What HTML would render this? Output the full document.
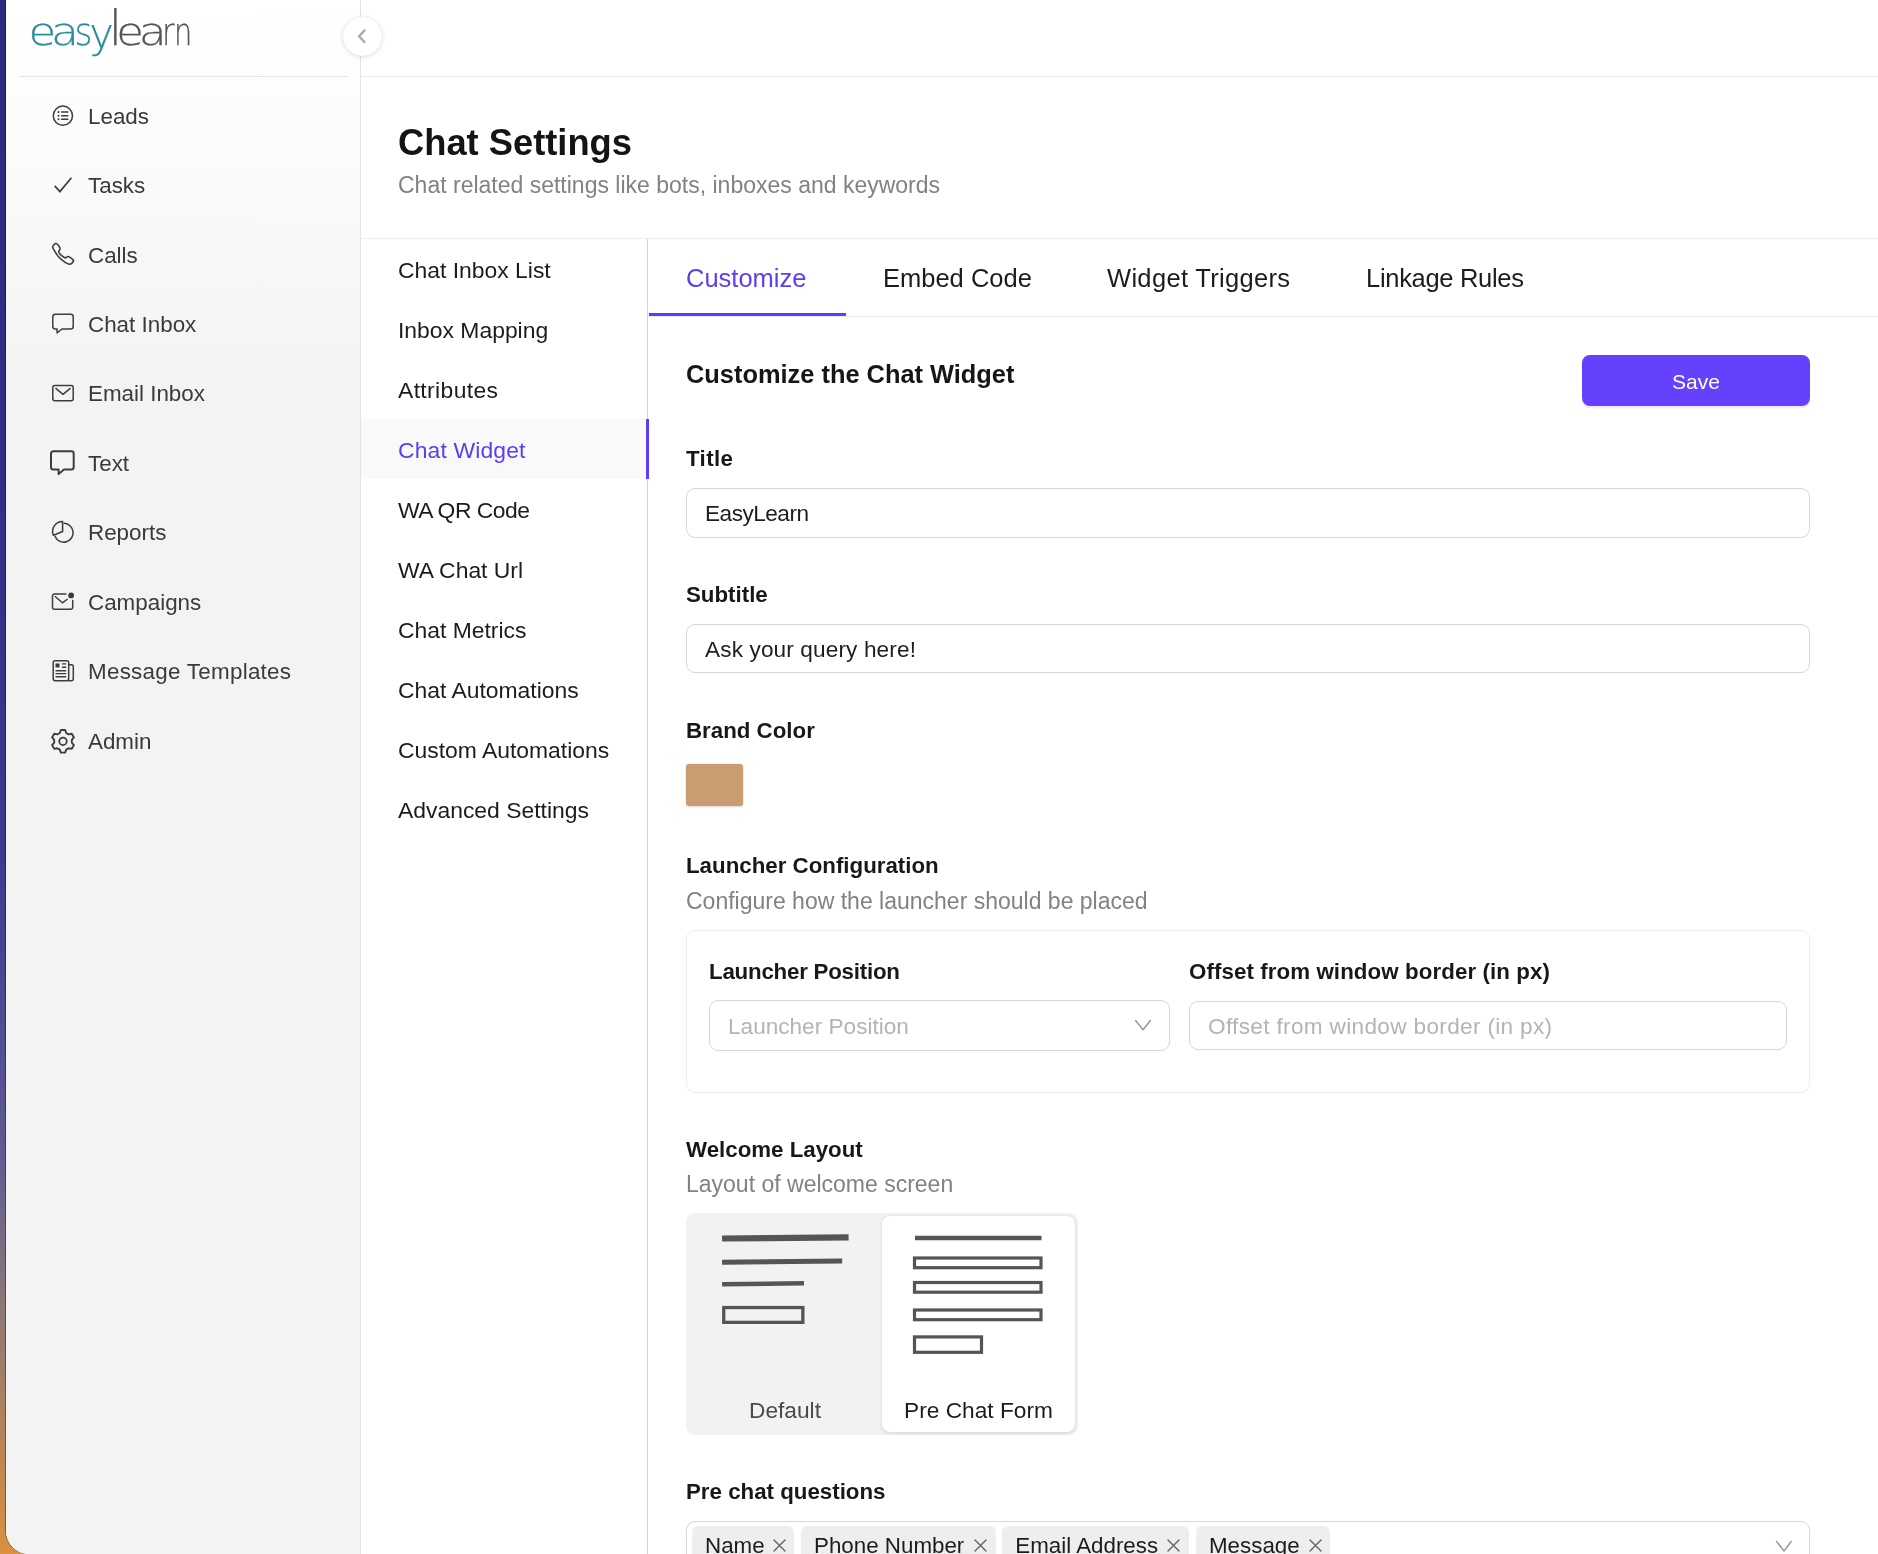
<!DOCTYPE html>
<html lang="en">
<head>
<meta charset="utf-8">
<title>Chat Settings</title>
<style>
*{box-sizing:border-box;margin:0;padding:0}
html,body{width:1878px;height:1554px;overflow:hidden}
body{font-family:"Liberation Sans",sans-serif;color:#1a1a1a;
  background:linear-gradient(to bottom,#2a2a80 0%,#2e2e86 30%,#3a3a90 55%,#5f5a94 74%,#8c7878 84%,#b5835a 92%,#d8913f 100%);
  position:relative}
.window{position:absolute;left:6px;top:0;width:1872px;height:1554px;background:#fff;border-bottom-left-radius:23px;overflow:hidden;will-change:transform;
  box-shadow:-1px 0 0 rgba(0,0,20,.38)}
/* ---------- sidebar ---------- */
.sidebar{position:absolute;left:0;top:0;width:355px;height:1554px;border-right:1px solid #e4e4e4;
  background:linear-gradient(to bottom,#ffffff 0,#fdfdfd 90px,#f3f3f3 400px,#f3f3f3 100%)}
.logo{position:absolute;left:18px;top:0;width:190px;height:70px}
.side-divider{position:absolute;left:13px;top:76px;width:329px;height:1px;background:#e4e4e4}
.nav{position:absolute;left:0;top:82px;width:354px;list-style:none}
.nav li{height:69.44px;display:flex;align-items:center;padding-left:42.65px;font-size:22.4px;letter-spacing:0;color:#3a3a3a}
.nav li svg{width:28px;height:28px;flex:none;margin-right:11.35px;position:relative;top:-.8px;stroke:#3d3d3d;fill:none;stroke-width:1.5;stroke-linecap:round;stroke-linejoin:round}
.collapse{position:absolute;left:336.5px;top:16.5px;width:39px;height:39px;border-radius:50%;background:#fff;
  box-shadow:0 1px 5px rgba(0,0,0,.13),0 0 1px rgba(0,0,0,.12);z-index:5}
.collapse svg{position:absolute;left:.5px;top:.5px;width:38px;height:38px;stroke:#a9a9a9;fill:none;stroke-width:2.3;stroke-linecap:butt;stroke-linejoin:miter}
/* ---------- main ---------- */
.main{position:absolute;left:355px;top:0;width:1517px;height:1554px;background:#fff}
.topbar{position:absolute;left:0;top:0;width:100%;height:77px;border-bottom:1px solid #ececec}
.page-head{position:absolute;left:0;top:77px;width:100%;height:162px;border-bottom:1px solid #eeeeee}
.page-head h1{position:absolute;left:37px;top:45px;font-size:36.3px;line-height:42px;font-weight:700;letter-spacing:0;color:#141414;white-space:nowrap}
.page-head p{position:absolute;left:37px;top:94.6px;font-size:23px;line-height:26px;letter-spacing:0;color:#828282;white-space:nowrap}
/* sub nav */
.subnav{position:absolute;left:0;top:239px;width:287px;height:1315px;border-right:1px solid #d3d3d3;list-style:none}
.subnav li{height:60px;line-height:62px;padding-left:37px;font-size:22.9px;letter-spacing:0;color:#1c1c1c;white-space:nowrap;position:relative}
.subnav li.active{background:#f9f9f9;color:#5a3df5}
.subnav li.active::after{content:"";position:absolute;right:-2px;top:0;width:3px;height:60px;background:#5d3bfd}
/* content */
.content{position:absolute;left:288px;top:239px;width:1229px;height:1315px}
.tabs{position:absolute;left:0;top:0;width:100%;height:78px;border-bottom:1px solid #ebebeb;display:flex}
.tab{position:absolute;top:0;height:78px;line-height:78px;font-size:25.5px;letter-spacing:0;color:#1c1c1c;white-space:nowrap}
.tab.active{color:#5b3ff0}
.tab-ink{position:absolute;left:0;top:74px;width:197px;height:3px;background:#5d3bfd}
.form{position:absolute;left:37px;top:78px;width:1124px}
.form h2{position:absolute;left:0;top:42px;font-size:25.4px;line-height:30px;font-weight:700;letter-spacing:0;color:#161616;white-space:nowrap}
.save{position:absolute;left:896px;top:38px;width:228px;height:51px;border-radius:8px;background:#6541fd;color:#fff;font-size:21px;letter-spacing:0;
  text-align:center;line-height:54px;box-shadow:0 2.5px 0 rgba(101,65,253,.1)}
.label{position:absolute;left:0;margin-top:1px;font-size:22.3px;line-height:26px;font-weight:700;letter-spacing:0;color:#181818;white-space:nowrap}
.desc{position:absolute;left:0;margin-top:.6px;font-size:23px;line-height:26px;letter-spacing:0;color:#828282;white-space:nowrap}
.input{position:absolute;left:0;width:1124px;height:50px;border:1px solid #d6d6d6;border-radius:9px;background:#fff;
  font-size:22.6px;letter-spacing:0;line-height:50px;padding-left:18px;color:#1e1e1e;white-space:nowrap}
.ph{color:#b4b4b4}
.swatch{position:absolute;left:0;top:447px;width:57px;height:42px;background:#c99c72;border-radius:3px;box-shadow:0 0 0 1px rgba(0,0,0,.05),0 2px 1px rgba(0,0,0,.06)}
.card{position:absolute;left:0;top:613px;width:1124px;height:163px;border:1px solid #ececec;border-radius:9px}
.seg{position:absolute;left:0;top:896px;width:392px;height:222px;border-radius:9px;background:#f2f2f2}
.seg .opt{position:absolute;top:3px;height:216px;text-align:center;font-size:22.7px;letter-spacing:0}
.seg .opt span{position:absolute;left:0;right:0;top:180px;line-height:28px}
.seg .opt.sel{background:#fff;border-radius:8px;box-shadow:0 1px 4px rgba(0,0,0,.12),0 0 1px rgba(0,0,0,.08);color:#1c1c1c}
.seg svg{position:absolute;left:0;top:0}
.chev{position:absolute;stroke:#9a9a9a;fill:none;stroke-width:1.5;stroke-linecap:round;stroke-linejoin:round}
.tag{position:absolute;top:4px;height:40px;background:#eeeeee;border-radius:6px;font-size:22.35px;letter-spacing:0;line-height:39px;padding-left:13px;color:#1c1c1c;white-space:nowrap}
.tag svg{position:absolute;top:11.5px;width:15px;height:15px;stroke:#6a6a6a;stroke-width:1.5;fill:none;stroke-linecap:round}
</style>
</head>
<body>
<div class="window">
  <aside class="sidebar">
    <div class="logo">
      <svg width="190" height="70" viewBox="0 0 190 70" font-family="DejaVu Sans" font-weight="200" font-size="37.3" stroke-width=".25">
        <text y="44.6" fill="#2b8d9a" stroke="#2b8d9a"><tspan x="4.6" textLength="27.7" lengthAdjust="spacingAndGlyphs">e</tspan><tspan x="27.0" textLength="28.0" lengthAdjust="spacingAndGlyphs">a</tspan><tspan x="50.6" textLength="18.0" lengthAdjust="spacingAndGlyphs">s</tspan><tspan x="65.3" y="47.7" font-size="43.4" textLength="24.6" lengthAdjust="spacingAndGlyphs">y</tspan></text>
        <text y="44.6" fill="#555" stroke="#555"><tspan x="84.8" font-size="48.3" textLength="13.4" lengthAdjust="spacingAndGlyphs">l</tspan><tspan x="92.3" textLength="27.7" lengthAdjust="spacingAndGlyphs">e</tspan><tspan x="114.7" textLength="28.0" lengthAdjust="spacingAndGlyphs">a</tspan><tspan x="137.9" textLength="12.6" lengthAdjust="spacingAndGlyphs">r</tspan><tspan x="150.1" textLength="18.3" lengthAdjust="spacingAndGlyphs">n</tspan></text>
      </svg>
    </div>
    <div class="side-divider"></div>
    <ul class="nav">
      <li><svg viewBox="0 0 28 28"><circle cx="13.9" cy="13.7" r="9.6" stroke-width="1.5"/><path d="M12.1 10.1H19.4M12.1 13.7H19.4M12.1 17.3H19.4" stroke-width="1.5" stroke-linecap="butt"/><path d="M9.5 10.1h.01M9.5 13.7h.01M9.5 17.3h.01" stroke-width="2.1"/></svg>Leads</li>
      <li><svg viewBox="0 0 28 28"><path d="M5.7 14.84L10.9 20.64 22.4 6.74" stroke-width="1.7" stroke-linecap="butt" stroke-linejoin="miter"/></svg>Tasks</li>
      <li><svg viewBox="0 0 28 28"><path d="M6.82 2.45C7.37 2.55 8.19 3.05 8.88 3.79C9.57 4.53 10.63 6.06 10.94 6.88C11.25 7.70 10.95 8.15 10.74 8.73C10.54 9.31 9.75 9.76 9.71 10.38C9.68 11.00 9.98 11.68 10.53 12.44C11.08 13.20 12.11 14.19 13.00 14.91C13.89 15.63 15.19 16.49 15.88 16.76C16.57 17.04 16.64 16.77 17.12 16.56C17.60 16.35 18.19 15.60 18.77 15.53C19.35 15.46 19.73 15.60 20.62 16.15C21.51 16.70 23.47 18.20 24.12 18.82C24.77 19.44 24.77 19.27 24.53 19.85C24.29 20.43 23.30 21.77 22.68 22.32C22.06 22.87 21.62 23.15 20.83 23.15C20.04 23.15 19.11 22.90 17.94 22.32C16.77 21.74 15.33 20.88 13.82 19.65C12.31 18.41 10.25 16.52 8.88 14.91C7.51 13.30 6.45 11.38 5.59 9.97C4.73 8.56 3.97 7.33 3.73 6.47C3.49 5.61 3.84 5.37 4.15 4.82C4.46 4.27 5.14 3.56 5.59 3.17C6.04 2.77 6.27 2.35 6.82 2.45Z" stroke-width="1.55"/></svg>Calls</li>
      <li><svg viewBox="0 0 28 28"><path d="M6.3 4.16H21.7a2.5 2.5 0 0 1 2.5 2.5V16.46a2.5 2.5 0 0 1-2.5 2.5H12.9L8.1 23V18.96H6.3a2.5 2.5 0 0 1-2.5-2.5V6.66a2.5 2.5 0 0 1 2.5-2.5Z" stroke-width="1.5"/></svg>Chat Inbox</li>
      <li><svg viewBox="0 0 28 28"><rect x="3.8" y="5.42" width="20.4" height="15.3" rx="2" stroke-width="1.5"/><path d="M6.5 8.2L14 14.3 21.5 8.2" stroke-width="1.5" stroke-linecap="butt"/></svg>Email Inbox</li>
      <li><svg viewBox="0 0 28 28"><path d="M4.3 2.28H22.4a2.3 2.3 0 0 1 2.3 2.3V18.28a2.3 2.3 0 0 1-2.3 2.3H15L9.6 25V20.58H4.3a2.3 2.3 0 0 1-2.3-2.3V4.58a2.3 2.3 0 0 1 2.3-2.3Z" stroke-width="2"/></svg>Text</li>
      <li><svg viewBox="0 0 28 28"><path d="M13.6 12.44V2.44A10 10 0 0 0 4.36 16.27Z" stroke-width="1.55"/><path d="M15.2 4.35A9.4 9.4 0 1 1 6 17.24" stroke-width="1.55"/></svg>Reports</li>
      <li><svg viewBox="0 0 28 28"><path d="M16.9 5.9H5.5a2 2 0 0 0-2 2V19.2a2 2 0 0 0 2 2H21.7a2 2 0 0 0 2-2V12.4" stroke-width="1.5"/><path d="M5.9 8.3L13.4 14.8 18.6 11" stroke-width="1.5" stroke-linecap="butt"/><circle cx="22.1" cy="7.4" r="2.9" fill="#3a3a3a" stroke="none"/></svg>Campaigns</li>
      <li><svg viewBox="0 0 28 28"><rect x="4.2" y="3.66" width="15.5" height="20" rx="1.8" stroke-width="1.5"/><path d="M19.7 7.66H22.3a2 2 0 0 1 2 2V21.66a2 2 0 0 1-2 2H19.7" stroke-width="1.5"/><rect x="6.5" y="6.46" width="4" height="4" fill="#3a3a3a" stroke="none"/><path d="M12.9 6.96H17.2M12.9 10.26H17.2M6.5 13.76H17.2M6.5 16.66H17.2M6.5 19.76H17.2" stroke-width="1.3" stroke-linecap="butt"/></svg><span style="letter-spacing:.27px">Message Templates</span></li>
      <li><svg viewBox="0 0 28 28"><path d="M10.81 5.99L11.86 2.95L16.14 2.95L17.19 5.99L19.60 7.38L22.76 6.77L24.90 10.48L22.79 12.91L22.79 15.69L24.90 18.12L22.76 21.83L19.60 21.22L17.19 22.61L16.14 25.65L11.86 25.65L10.81 22.61L8.40 21.22L5.24 21.83L3.10 18.12L5.21 15.69L5.21 12.91L3.10 10.48L5.24 6.77L8.40 7.38Z" stroke-width="1.9"/><circle cx="14" cy="14.3" r="3.75" stroke-width="1.8"/></svg>Admin</li>
    </ul>
  </aside>
  <div class="collapse"><svg viewBox="0 0 38 38"><path d="M22.1 12.7L16.1 19.2 22.1 25.7"/></svg></div>
  <main class="main">
    <div class="topbar"></div>
    <header class="page-head">
      <h1>Chat Settings</h1>
      <p>Chat related settings like bots, inboxes and keywords</p>
    </header>
    <ul class="subnav">
      <li>Chat Inbox List</li>
      <li>Inbox Mapping</li>
      <li style="letter-spacing:.37px">Attributes</li>
      <li class="active" style="letter-spacing:.15px">Chat Widget</li>
      <li style="letter-spacing:-.5px">WA QR Code</li>
      <li>WA Chat Url</li>
      <li>Chat Metrics</li>
      <li>Chat Automations</li>
      <li>Custom Automations</li>
      <li>Advanced Settings</li>
    </ul>
    <section class="content">
      <div class="tabs">
        <div class="tab active" style="left:37px">Customize</div>
        <div class="tab" style="left:234px">Embed Code</div>
        <div class="tab" style="left:458px;letter-spacing:.32px">Widget Triggers</div>
        <div class="tab" style="left:717px;letter-spacing:-.3px">Linkage Rules</div>
        <div class="tab-ink"></div>
      </div>
      <div class="form">
        <h2>Customize the Chat Widget</h2>
        <div class="save">Save</div>
        <div class="label" style="top:128px;letter-spacing:.39px">Title</div>
        <div class="input" style="top:171px;letter-spacing:-.5px">EasyLearn</div>
        <div class="label" style="top:264px">Subtitle</div>
        <div class="input" style="top:307px;height:49px;letter-spacing:.13px">Ask your query here!</div>
        <div class="label" style="top:400px">Brand Color</div>
        <div class="swatch"></div>
        <div class="label" style="top:535px">Launcher Configuration</div>
        <div class="desc" style="top:570px">Configure how the launcher should be placed</div>
        <div class="card">
          <div class="label" style="left:22px;top:27px;letter-spacing:-.22px">Launcher Position</div>
          <div class="input" style="left:22px;top:69px;width:461px;height:51px;line-height:52px"><span class="ph">Launcher Position</span>
            <svg class="chev" style="left:423px;top:16px" width="20" height="16" viewBox="0 0 20 16"><path d="M2.6 3.5L10 12.8 17.4 3.5"/></svg></div>
          <div class="label" style="left:502px;top:27px;letter-spacing:.09px">Offset from window border (in px)</div>
          <div class="input" style="left:502px;top:70px;width:598px;height:49px;line-height:49px"><span class="ph" style="letter-spacing:.33px">Offset from window border (in px)</span></div>
        </div>
        <div class="label" style="top:819px">Welcome Layout</div>
        <div class="desc" style="top:853px">Layout of welcome screen</div>
        <div class="seg">
          <div class="opt" style="left:2px;width:194px;color:#4a4a4a">
            <svg width="194" height="170" viewBox="0 0 194 170" fill="none" stroke="#555">
              <path d="M34.1 22.5L160.6 21.3" stroke-width="6.2"/><path d="M34.1 46.2L154.2 44.9" stroke-width="5"/><path d="M34.1 68.3L116 67.2" stroke-width="4.5"/>
              <rect x="35.75" y="91.55" width="79.1" height="14.8" stroke-width="3.3"/>
            </svg>
            <span>Default</span></div>
          <div class="opt sel" style="left:196px;width:193px">
            <svg width="193" height="170" viewBox="0 0 193 170" fill="none" stroke="#555">
              <path d="M33 22H159.5" stroke-width="4.5"/>
              <rect x="32.5" y="42" width="126.5" height="9.7" stroke-width="3.2"/>
              <rect x="32.5" y="66.5" width="126.5" height="9.7" stroke-width="3.2"/>
              <rect x="32.5" y="94" width="126.5" height="9.7" stroke-width="3.2"/>
              <rect x="32.5" y="120.9" width="67" height="15.4" stroke-width="3.2"/>
            </svg>
            <span>Pre Chat Form</span></div>
        </div>
        <div class="label" style="top:1161px">Pre chat questions</div>
        <div class="input" style="top:1204px;height:60px;padding:0">
          <div class="tag" style="left:5px;width:102px">Name<svg style="left:79.5px" viewBox="0 0 15 15"><path d="M2 2l11 11M13 2L2 13"/></svg></div>
          <div class="tag" style="left:114px;width:195px">Phone Number<svg style="left:172.2px" viewBox="0 0 15 15"><path d="M2 2l11 11M13 2L2 13"/></svg></div>
          <div class="tag" style="left:315.3px;width:186.4px">Email Address<svg style="left:163.9px" viewBox="0 0 15 15"><path d="M2 2l11 11M13 2L2 13"/></svg></div>
          <div class="tag" style="left:509px;width:134px">Message<svg style="left:111.5px" viewBox="0 0 15 15"><path d="M2 2l11 11M13 2L2 13"/></svg></div>
          <svg class="chev" style="left:1087px;top:15.5px" width="20" height="16" viewBox="0 0 20 16"><path d="M2.6 3.5L10 13 17.2 3.5"/></svg>
        </div>
      </div>
    </section>
  </main>
</div>
</body>
</html>
